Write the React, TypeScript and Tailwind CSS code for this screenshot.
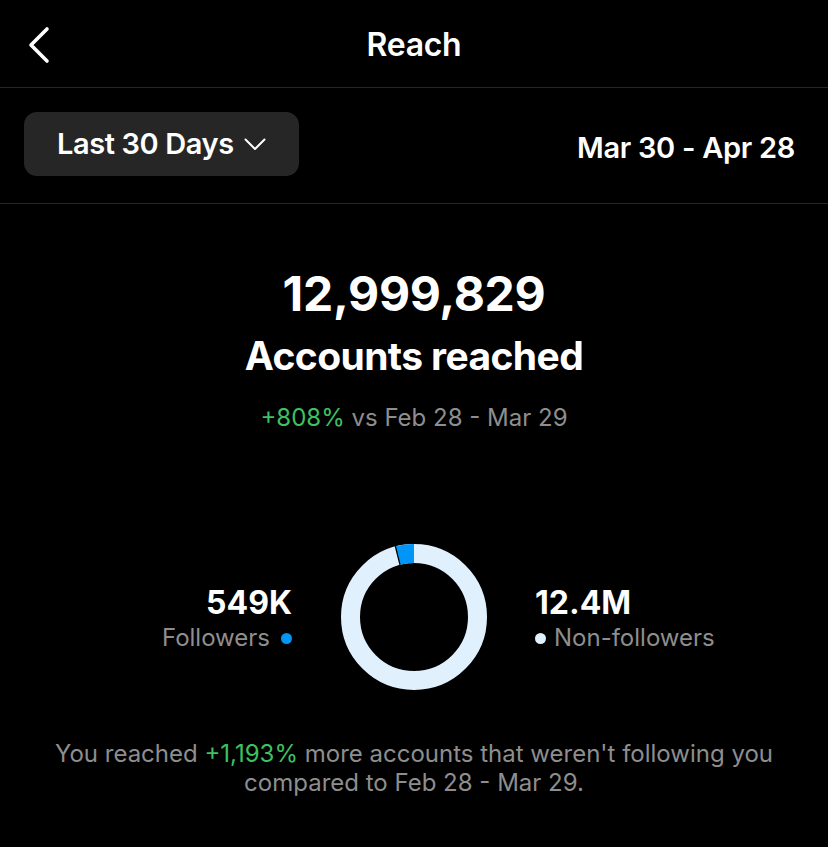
const FONT = 'font-["Inter","Noto_Sans",sans-serif]';

function Donut() {
  // 549K of 12,999,829 ≈ 4.2% → ~15° from 12 o'clock, counter-clockwise
  return (
    <svg width="148" height="148" viewBox="0 0 148 148" className="shrink-0">
      <circle cx="74" cy="74" r="63.5" fill="none" stroke="#e1f0fd" strokeWidth="19" />
      <path d="M57.57 12.66 A63.5 63.5 0 0 1 74 10.5" fill="none" stroke="#0095f6" strokeWidth="19" />
      <line x1="55.3" y1="3" x2="60" y2="21.8" stroke="#000" strokeWidth="1.3" />
    </svg>
  );
}

export default function App() {
  return (
    <main className={`w-[828px] h-[847px] bg-black text-white overflow-hidden ${FONT}`}>
      {/* Header */}
      <header className="relative h-[88px] flex items-center justify-center border-b border-[#262626]">
        <svg className="absolute left-[26px] top-[26px]" width="26" height="38" viewBox="0 0 26 38">
          <path d="M21 3 L5 19 L21 35" fill="none" stroke="#fff" strokeWidth="3.6" strokeLinecap="round" strokeLinejoin="round" />
        </svg>
        <h1 className="text-[32px] font-semibold tracking-[-0.3px] mt-[2px]">Reach</h1>
      </header>

      {/* Filter row */}
      <div className="h-[116px] flex items-center justify-between pl-6 pr-[33px] border-b border-[#262626]">
        <button className="-mt-1 h-16 w-[275px] rounded-[13px] bg-[#262626] flex items-center pl-[33px] gap-[10px]">
          <span className="text-[29px] font-semibold tracking-[-0.4px]">Last 30 Days</span>
          <svg width="22" height="13" viewBox="0 0 22 13" className="mt-[2px]">
            <path d="M1.5 1.5 L11 11 L20.5 1.5" fill="none" stroke="#fff" strokeWidth="2" strokeLinecap="round" strokeLinejoin="round" />
          </svg>
        </button>
        <span className="text-[29px] font-semibold tracking-[-0.3px] mt-[4px]">Mar 30 - Apr 28</span>
      </div>

      {/* Summary */}
      <section className="flex flex-col items-center pt-[62px]">
        <div className="text-[48px] leading-[56px] font-bold tracking-[-0.3px]">12,999,829</div>
        <div className="text-[39px] leading-[46px] font-bold tracking-[-0.6px] mt-[11px]">Accounts reached</div>
        <div className="text-[24px] leading-[32px] text-[#8e8e8e] mt-[23px]">
          <span className="text-[#3ec15f]">+808%</span> vs Feb 28 - Mar 29
        </div>
      </section>

      {/* Breakdown */}
      <section className="flex items-center justify-center mt-[109px]">
        <div className="w-[293px] flex flex-col items-end pr-[1px] mt-[4px]">
          <div className="text-[32px] leading-[36px] font-bold">549K</div>
          <div className="flex items-center gap-[11px] text-[24px] leading-[30px] text-[#8e8e8e] mt-[2px]">
            Followers
            <span className="w-[11px] h-[11px] rounded-full bg-[#0095f6]" />
          </div>
        </div>
        <div className="mx-[47px]">
          <Donut />
        </div>
        <div className="w-[293px] flex flex-col items-start mt-[4px]">
          <div className="text-[32px] leading-[36px] font-bold">12.4M</div>
          <div className="flex items-center gap-[8px] text-[24px] leading-[30px] text-[#8e8e8e] mt-[2px]">
            <span className="w-[11px] h-[11px] rounded-full bg-[#e1f0fd]" />
            Non-followers
          </div>
        </div>
      </section>

      {/* Footnote */}
      <p className="mt-[48px] px-8 text-center text-[24px] leading-[29px] text-[#8e8e8e]">
        You reached <span className="text-[#3ec15f]">+1,193%</span> more accounts that weren't following you
        <br />
        compared to Feb 28 - Mar 29.
      </p>
    </main>
  );
}
